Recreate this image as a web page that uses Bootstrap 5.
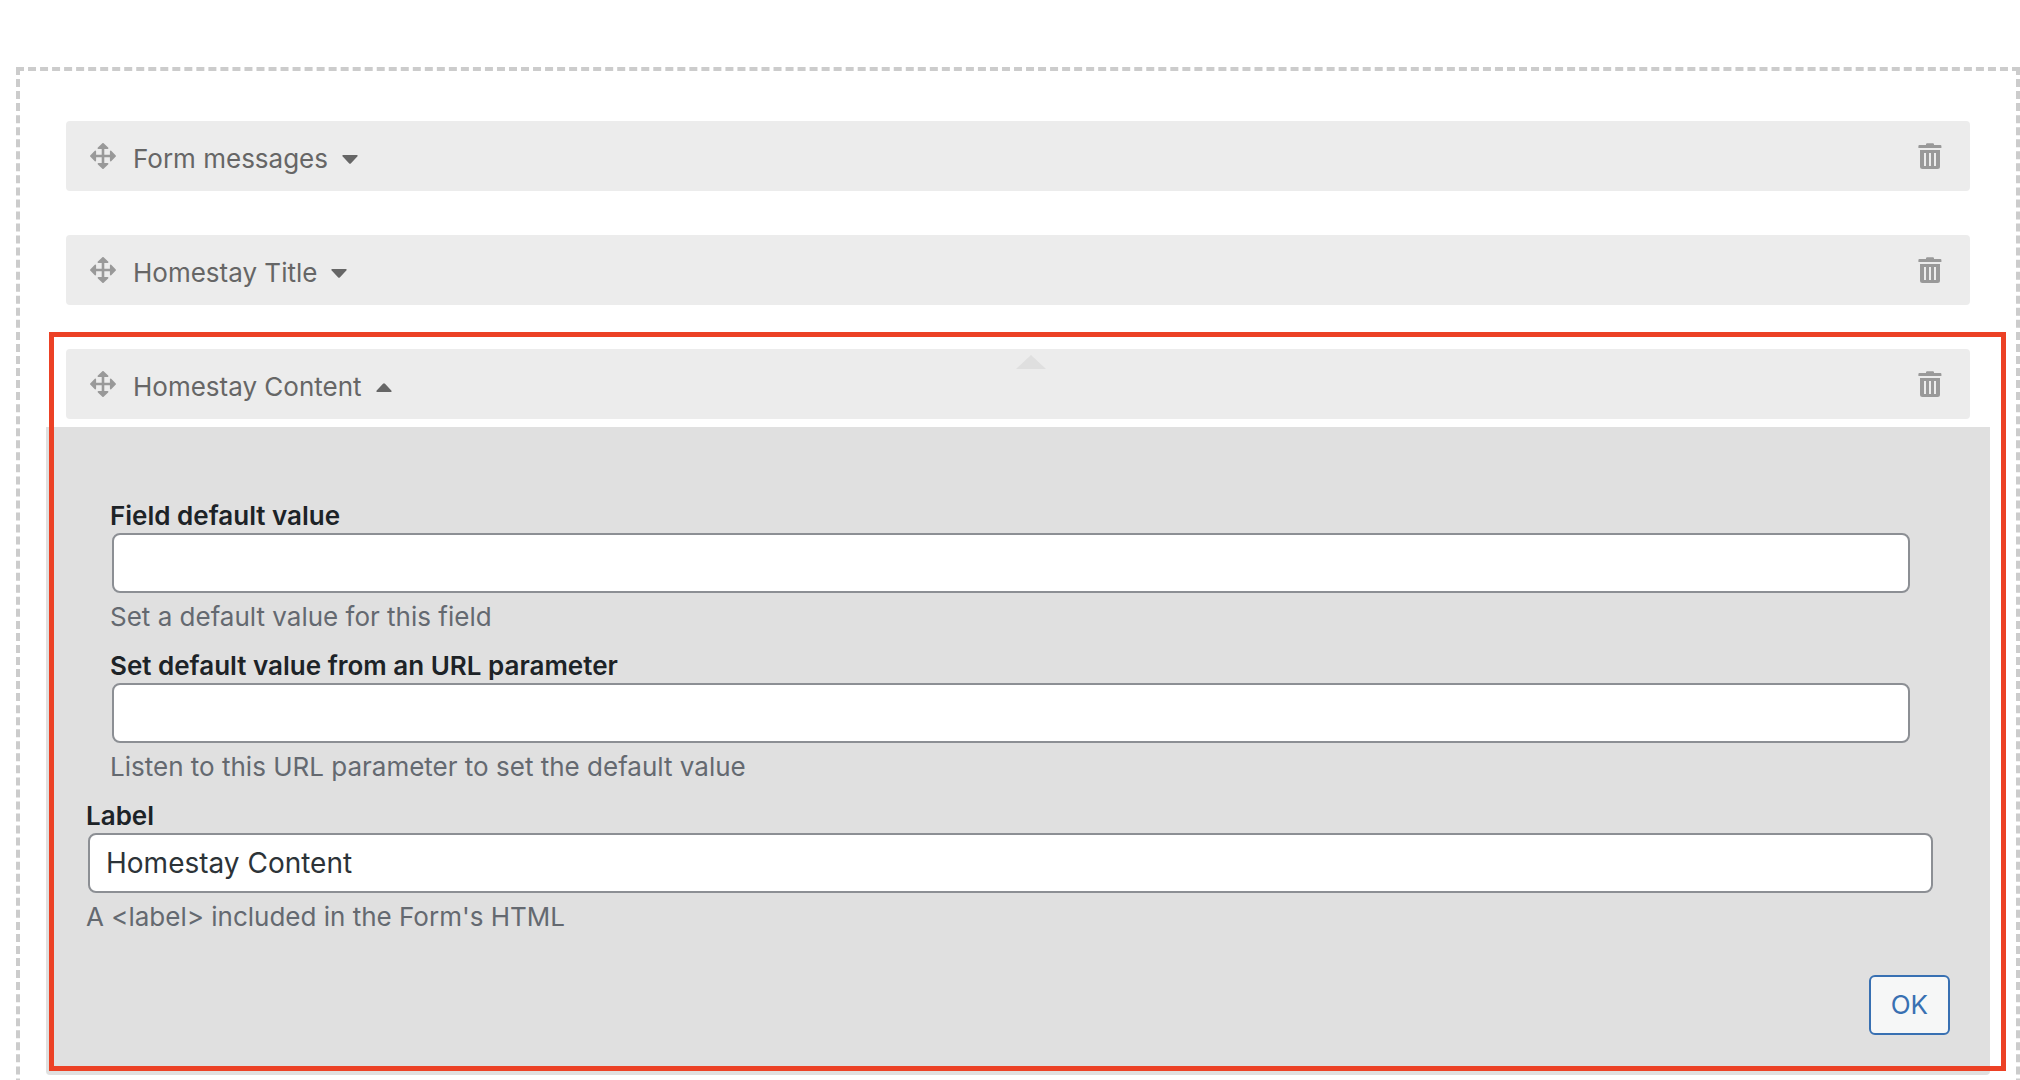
<!DOCTYPE html>
<html lang="en">
<head>
<meta charset="utf-8">
<meta name="viewport" content="width=device-width, initial-scale=1">
<title>Form editor</title>
<link href="https://cdn.jsdelivr.net/npm/bootstrap@5.3.0/dist/css/bootstrap.min.css" rel="stylesheet">
<style>
  body { font-family: Inter, "Liberation Sans", sans-serif; font-size: 26px; line-height: 34px; background: #fff; color: #1d2327; }
  .page-wrap { height: 100vh; overflow: hidden; padding: 67px 0 0 16px; }
  .drop-zone { border: 4px dashed #ccc; padding: 50px 46px; min-height: 110vh; }
  .field-stack { gap: 44px; }
  .field-bar { background: #ececec; border-radius: 4px; height: 70px; padding: 0 28px 0 24px; color: #666; }
  .bar-toggle { gap: 14px; padding: 6px 0 0; margin-left: 17px; color: inherit; }
  .bar-icon { color: #999; }
  .bar-pointer { position: absolute; top: 6px; left: 50%; margin-left: -2px; color: #dfdfdf; }
  .field-panel { background: #e0e0e0; border-radius: 0 0 4px 4px; margin: 8px -20px 0; padding: 72px 40px 40px; }
  .panel-fields { padding-right: 15px; }
  .nested-fields { padding: 0 23px 0 24px; }
  .field-row { margin-bottom: 15px; }
  .field-row label { font-weight: 600; }
  .field-input { display: block; width: calc(100% - 4px); height: 60px; margin: 0 2px 7px; padding: 0 16px; border: 2px solid #8c8f94; border-radius: 8px; font-size: 28px; color: #2c3338; background: #fff; }
  .field-help { color: #646970; margin: 0; }
  .btn-ok { height: 60px; margin-top: 26px; padding: 0 20px; border: 2px solid #3870b2; border-radius: 6px; background: #f6f7f7; color: #3870b2; font-size: 26px; line-height: 34px; }
  .highlight { position: absolute; inset: -17px -36px 4px -17px; border: 5px solid #ec4125; pointer-events: none; }
</style>
<script src="https://cdn.jsdelivr.net/npm/bootstrap@5.3.0/dist/js/bootstrap.bundle.min.js"></script>
</head>
<body>
<svg class="d-none" aria-hidden="true">
  <symbol id="i-move" viewBox="0 0 26 26">
    <path fill="currentColor" d="M11.700 5h2.600v16h-2.600zM5 11.700h16v2.600H5z"/>
    <path fill="currentColor" stroke="currentColor" stroke-width="1.800" stroke-linejoin="round" d="M13 .9 17.500 5.200H8.500zM13 25.100 17.500 20.800H8.500zM.9 13 5.200 8.500V17.500zM25.100 13 20.800 8.500V17.500z"/>
  </symbol>
  <symbol id="i-trash" viewBox="0 0 24 26">
    <path fill="currentColor" d="M8 2V1.2Q8 .2 9.2 .2H14.8Q16 .2 16 1.2V2H22.4Q23.4 2 23.4 3V5H.4V3Q.4 2 1.4 2z"/>
    <path fill="currentColor" fill-rule="evenodd" d="M2 7H22V23.5Q22 26 19.5 26H4.500Q2 26 2 23.500zM6 10V23H8V10zM11 10V23H13V10zM16 10V23H18V10z"/>
  </symbol>
  <symbol id="i-down" viewBox="0 0 16 9">
    <path fill="currentColor" d="M1.200 0H14.800Q16.300 .3 15.300 1.600L9 8.200Q8 9.300 7 8.200L.7 1.600Q-.3 .3 1.200 0z"/>
  </symbol>
  <symbol id="i-up" viewBox="0 0 16 9">
    <path fill="currentColor" d="M1.200 9H14.800Q16.300 8.700 15.300 7.400L9 .8Q8-.3 7 .8L.7 7.400Q-.3 8.700 1.200 9z"/>
  </symbol>
</svg>
<main class="page-wrap">
  <div class="drop-zone">
    <div class="field-stack d-flex flex-column">
      <section class="field-bar d-flex align-items-center">
        <svg class="bar-icon" width="26" height="26"><use href="#i-move"/></svg>
        <button type="button" class="bar-toggle d-flex align-items-center border-0 bg-transparent" aria-expanded="false">Form messages<svg width="16" height="9"><use href="#i-down"/></svg></button>
        <button type="button" class="bar-icon d-flex border-0 bg-transparent p-0 ms-auto" aria-label="Delete"><svg width="24" height="26"><use href="#i-trash"/></svg></button>
      </section>
      <section class="field-bar d-flex align-items-center">
        <svg class="bar-icon" width="26" height="26"><use href="#i-move"/></svg>
        <button type="button" class="bar-toggle d-flex align-items-center border-0 bg-transparent" aria-expanded="false">Homestay Title<svg width="16" height="9"><use href="#i-down"/></svg></button>
        <button type="button" class="bar-icon d-flex border-0 bg-transparent p-0 ms-auto" aria-label="Delete"><svg width="24" height="26"><use href="#i-trash"/></svg></button>
      </section>
      <section class="position-relative">
        <div class="field-bar d-flex align-items-center">
          <svg class="bar-icon" width="26" height="26"><use href="#i-move"/></svg>
          <button type="button" class="bar-toggle d-flex align-items-center border-0 bg-transparent" aria-expanded="true">Homestay Content<svg width="16" height="9"><use href="#i-up"/></svg></button>
          <button type="button" class="bar-icon d-flex border-0 bg-transparent p-0 ms-auto" aria-label="Delete"><svg width="24" height="26"><use href="#i-trash"/></svg></button>
        </div>
        <svg class="bar-pointer" width="30" height="14" viewBox="0 0 30 14"><path fill="currentColor" d="M15 0 30 14H0z"/></svg>
        <form class="field-panel">
          <div class="panel-fields">
            <div class="nested-fields">
              <div class="field-row">
                <label class="d-block" for="default-value">Field default value</label>
                <input class="field-input" type="text" id="default-value">
                <p class="field-help">Set a default value for this field</p>
              </div>
              <div class="field-row">
                <label class="d-block" for="url-param">Set default value from an URL parameter</label>
                <input class="field-input" type="text" id="url-param">
                <p class="field-help">Listen to this URL parameter to set the default value</p>
              </div>
            </div>
            <div class="field-row">
              <label class="d-block" for="field-label">Label</label>
              <input class="field-input" type="text" id="field-label" value="Homestay Content">
              <p class="field-help">A &lt;label&gt; included in the Form's HTML</p>
            </div>
          </div>
          <div class="d-flex justify-content-end">
            <button type="button" class="btn btn-ok">OK</button>
          </div>
        </form>
        <div class="highlight"></div>
      </section>
    </div>
  </div>
</main>
</body>
</html>
